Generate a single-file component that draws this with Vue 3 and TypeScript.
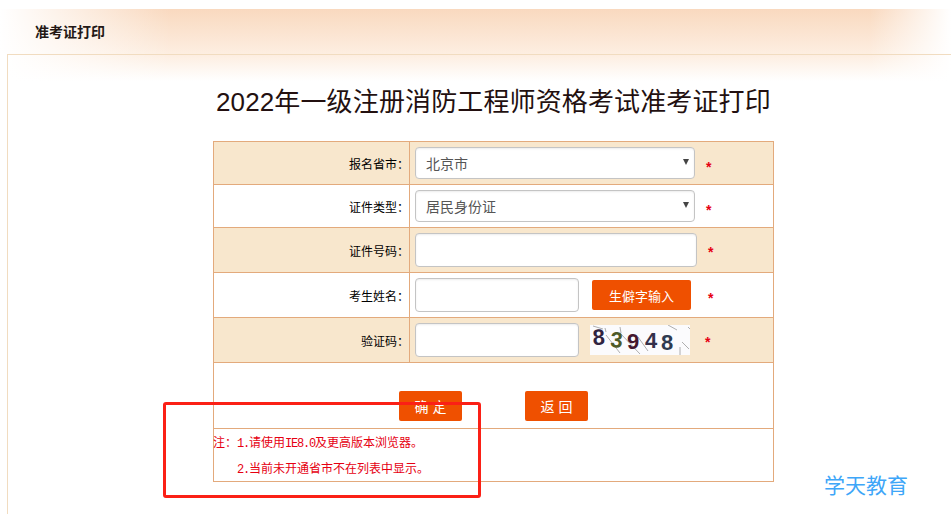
<script setup lang="ts">
interface Row {
  label: string
  kind: 'select' | 'input' | 'name' | 'code'
  value?: string
  tone: 'tan' | 'white'
  height: number
}
const rows: Row[] = [
  { label: '报名省市:', kind: 'select', value: '北京市', tone: 'tan', height: 43 },
  { label: '证件类型:', kind: 'select', value: '居民身份证', tone: 'white', height: 43 },
  { label: '证件号码:', kind: 'input', tone: 'tan', height: 45 },
  { label: '考生姓名:', kind: 'name', tone: 'white', height: 45 },
  { label: '验证码:', kind: 'code', tone: 'tan', height: 45 }
]
const digits = [
  { c: '8', x: 3, y: 20, fill: '#2f2340', r: -3 },
  { c: '3', x: 20, y: 22, fill: '#4d5a28', r: 4 },
  { c: '9', x: 37, y: 24, fill: '#45182e', r: 0 },
  { c: '4', x: 55, y: 23, fill: '#33304a', r: 0 },
  { c: '8', x: 71, y: 25, fill: '#2e3a50', r: 0 }
]
</script>

<template>
  <div class="page">
    <header class="head"><span class="crumb">准考证打印</span></header>
    <main class="panel">
      <h1 class="title">2022年一级注册消防工程师资格考试准考证打印</h1>
      <table class="form">
        <tbody>
          <tr v-for="row in rows" :key="row.label" :class="row.tone" :style="{ height: row.height + 'px' }">
            <td class="lab">{{ row.label.replace(':', '：') }}</td>
            <td class="val">
              <div class="line">
                <template v-if="row.kind === 'select'">
                  <div class="sel">
                    <span>{{ row.value }}</span>
                    <i class="arrow"></i>
                  </div>
                  <em class="star s-sel">*</em>
                </template>
                <template v-else-if="row.kind === 'input'">
                  <input class="inp wide" type="text" />
                  <em class="star s-wide">*</em>
                </template>
                <template v-else-if="row.kind === 'name'">
                  <input class="inp short" type="text" />
                  <button class="btn rare" type="button">生僻字输入</button>
                  <em class="star s-name">*</em>
                </template>
                <template v-else>
                  <input class="inp short" type="text" />
                  <svg class="captcha" width="100" height="30" viewBox="0 0 100 30">
                    <rect width="100" height="30" fill="#fbfbfd" />
                    <path d="M3 1l10 3M78 0l9 5M98 2l2 2M15 3l1 4M30 2l1 6M16 10l14 18M30 8l20 21M48 12l10 14M90 22v8M92 17l7 7" stroke="#9a9a9a" stroke-width="0.8" fill="none" />
                    <text
                      v-for="(d, i) in digits"
                      :key="i"
                      :x="d.x"
                      :y="d.y"
                      :fill="d.fill"
                      :transform="`rotate(${d.r} ${d.x} ${d.y})`"
                      class="digit"
                    >{{ d.c }}</text>
                  </svg>
                  <em class="star s-code">*</em>
                </template>
              </div>
            </td>
          </tr>
          <tr class="white actions">
            <td colspan="2">
              <div class="btns">
                <button class="btn act" type="button">确 定</button>
                <button class="btn act" type="button">返 回</button>
              </div>
            </td>
          </tr>
          <tr class="white notes">
            <td colspan="2">
              <div class="note-box">
                <p class="first">注：<span class="lat">1.</span>请使用<span class="lat">IE8.0</span>及更高版本浏览器。</p>
                <p class="second"><span class="lat">2.</span>当前未开通省市不在列表中显示。</p>
              </div>
            </td>
          </tr>
        </tbody>
      </table>
    </main>
    <div class="annotation"></div>
    <div class="brand">学天教育</div>
  </div>
</template>

<style>
html, body { margin: 0; background: #fff; overflow: hidden; }
</style>

<style scoped>
.page {
  position: relative;
  width: 951px;
  height: 514px;
  overflow: hidden;
  background: #fff;
  padding-top: 9px;
  box-sizing: border-box;
  font-family: "Liberation Sans", "Noto Sans CJK SC", sans-serif;
}
.head {
  height: 45px;
  box-sizing: border-box;
  padding: 14px 0 0 35px;
  background:
    linear-gradient(90deg, #fff 0, rgba(255,255,255,0) 170px, rgba(255,255,255,0) 870px, #fff 951px),
    linear-gradient(180deg, #f9d9bf 0, #fdeee1 100%);
}
.crumb { font-size: 14px; font-weight: 700; color: #231815; line-height: 18px; display: block; }
.panel {
  margin-left: 7px;
  height: 460px;
  box-sizing: border-box;
  border-left: 1px solid #f1dcc0;
  border-top: 1px solid #f1dcc0;
  background:
    linear-gradient(90deg, #fff 0, rgba(255,255,255,0) 162px, rgba(255,255,255,0) 862px, #fff 943px),
    linear-gradient(180deg, #fdeee1 0, #fff 26px);
  background-repeat: no-repeat;
  background-size: 100% 30px, 100% 30px;
}
.title {
  margin: 0;
  padding: 28px 0 0 208px;
  font-size: 26px;
  letter-spacing: 0.13px;
  line-height: 38px;
  height: 86px;
  box-sizing: border-box;
  font-weight: 400;
  color: #231010;
  white-space: nowrap;
}
.form {
  margin-left: 205px;
  width: 561px;
  border-collapse: collapse;
  table-layout: fixed;
  font-size: 12px;
  color: #000;
}
.form td { border: 1px solid #e3aa7c; padding: 0; }
.tan td { background: #f8e7cd; }
.white td { background: #fff; }
.lab { width: 196px; text-align: right; box-sizing: border-box; }
.line { display: flex; align-items: center; padding-left: 5px; }
.sel {
  width: 280px;
  height: 32px;
  box-sizing: border-box;
  border: 1px solid #c4c4c4;
  border-radius: 4px;
  background: #fff;
  box-shadow: inset 0 1px 2px rgba(0,0,0,0.08);
  display: flex;
  align-items: center;
  justify-content: space-between;
  padding: 0 5px 0 10px;
  font-size: 14px;
  color: #555;
}
.arrow {
  width: 0;
  height: 0;
  border-left: 3px solid transparent;
  border-right: 3px solid transparent;
  border-top: 6px solid #444;
  margin-top: -3px;
}
.inp {
  display: block;
  height: 34px;
  box-sizing: border-box;
  border: 1px solid #c4c4c4;
  border-radius: 4px;
  background: #fff;
  box-shadow: inset 0 1px 2px rgba(0,0,0,0.08);
  padding: 0;
  outline: none;
}
.wide { width: 282px; }
.short { width: 164px; }
.star { font-style: normal; font-weight: 700; color: #e60012; font-size: 14px; line-height: 14px; }
.s-sel { margin: 8px 0 0 11px; }
.s-wide { margin: 4px 0 0 11px; }
.s-name { margin: 6px 0 0 17px; }
.s-code { margin: 4px 0 0 15px; }
.btn {
  border: 0;
  border-radius: 2px;
  background: #ef5000;
  color: #fff;
  font-family: inherit;
  font-size: 13px;
  padding: 0;
  cursor: pointer;
}
.rare { width: 99px; height: 30px; margin-left: 13px; }
.captcha { margin-left: 11px; display: block; }
.digit { font-family: "Liberation Sans", sans-serif; font-size: 22px; font-weight: 700; }
.btns { display: flex; gap: 63px; padding-left: 185px; height: 65px; box-sizing: border-box; padding-top: 28px; }
.act { width: 63px; height: 30px; font-size: 14px; }
.actions td { height: 65px; }
.notes td { vertical-align: top; }
.note-box { height: 52px; padding-top: 1px; box-sizing: border-box; }
.notes p {
  margin: 0;
  height: 25px;
  color: #e60012;
  font-size: 12px;
  line-height: 26px;
  white-space: nowrap;
}
.lat { font-family: "Liberation Mono", monospace; font-size: 12px; letter-spacing: -1.2px; }
.first { margin: 0 0 0 -1px !important; height: 26px !important; }
.second { padding-left: 23px; }
.annotation {
  position: absolute;
  left: 163px;
  top: 402px;
  width: 318px;
  height: 96px;
  box-sizing: border-box;
  border: 3px solid #fb2016;
  border-radius: 3px;
}
.brand {
  position: absolute;
  left: 824px;
  top: 471px;
  font-size: 21px;
  line-height: 30px;
  color: #3ea6f8;
}
</style>
